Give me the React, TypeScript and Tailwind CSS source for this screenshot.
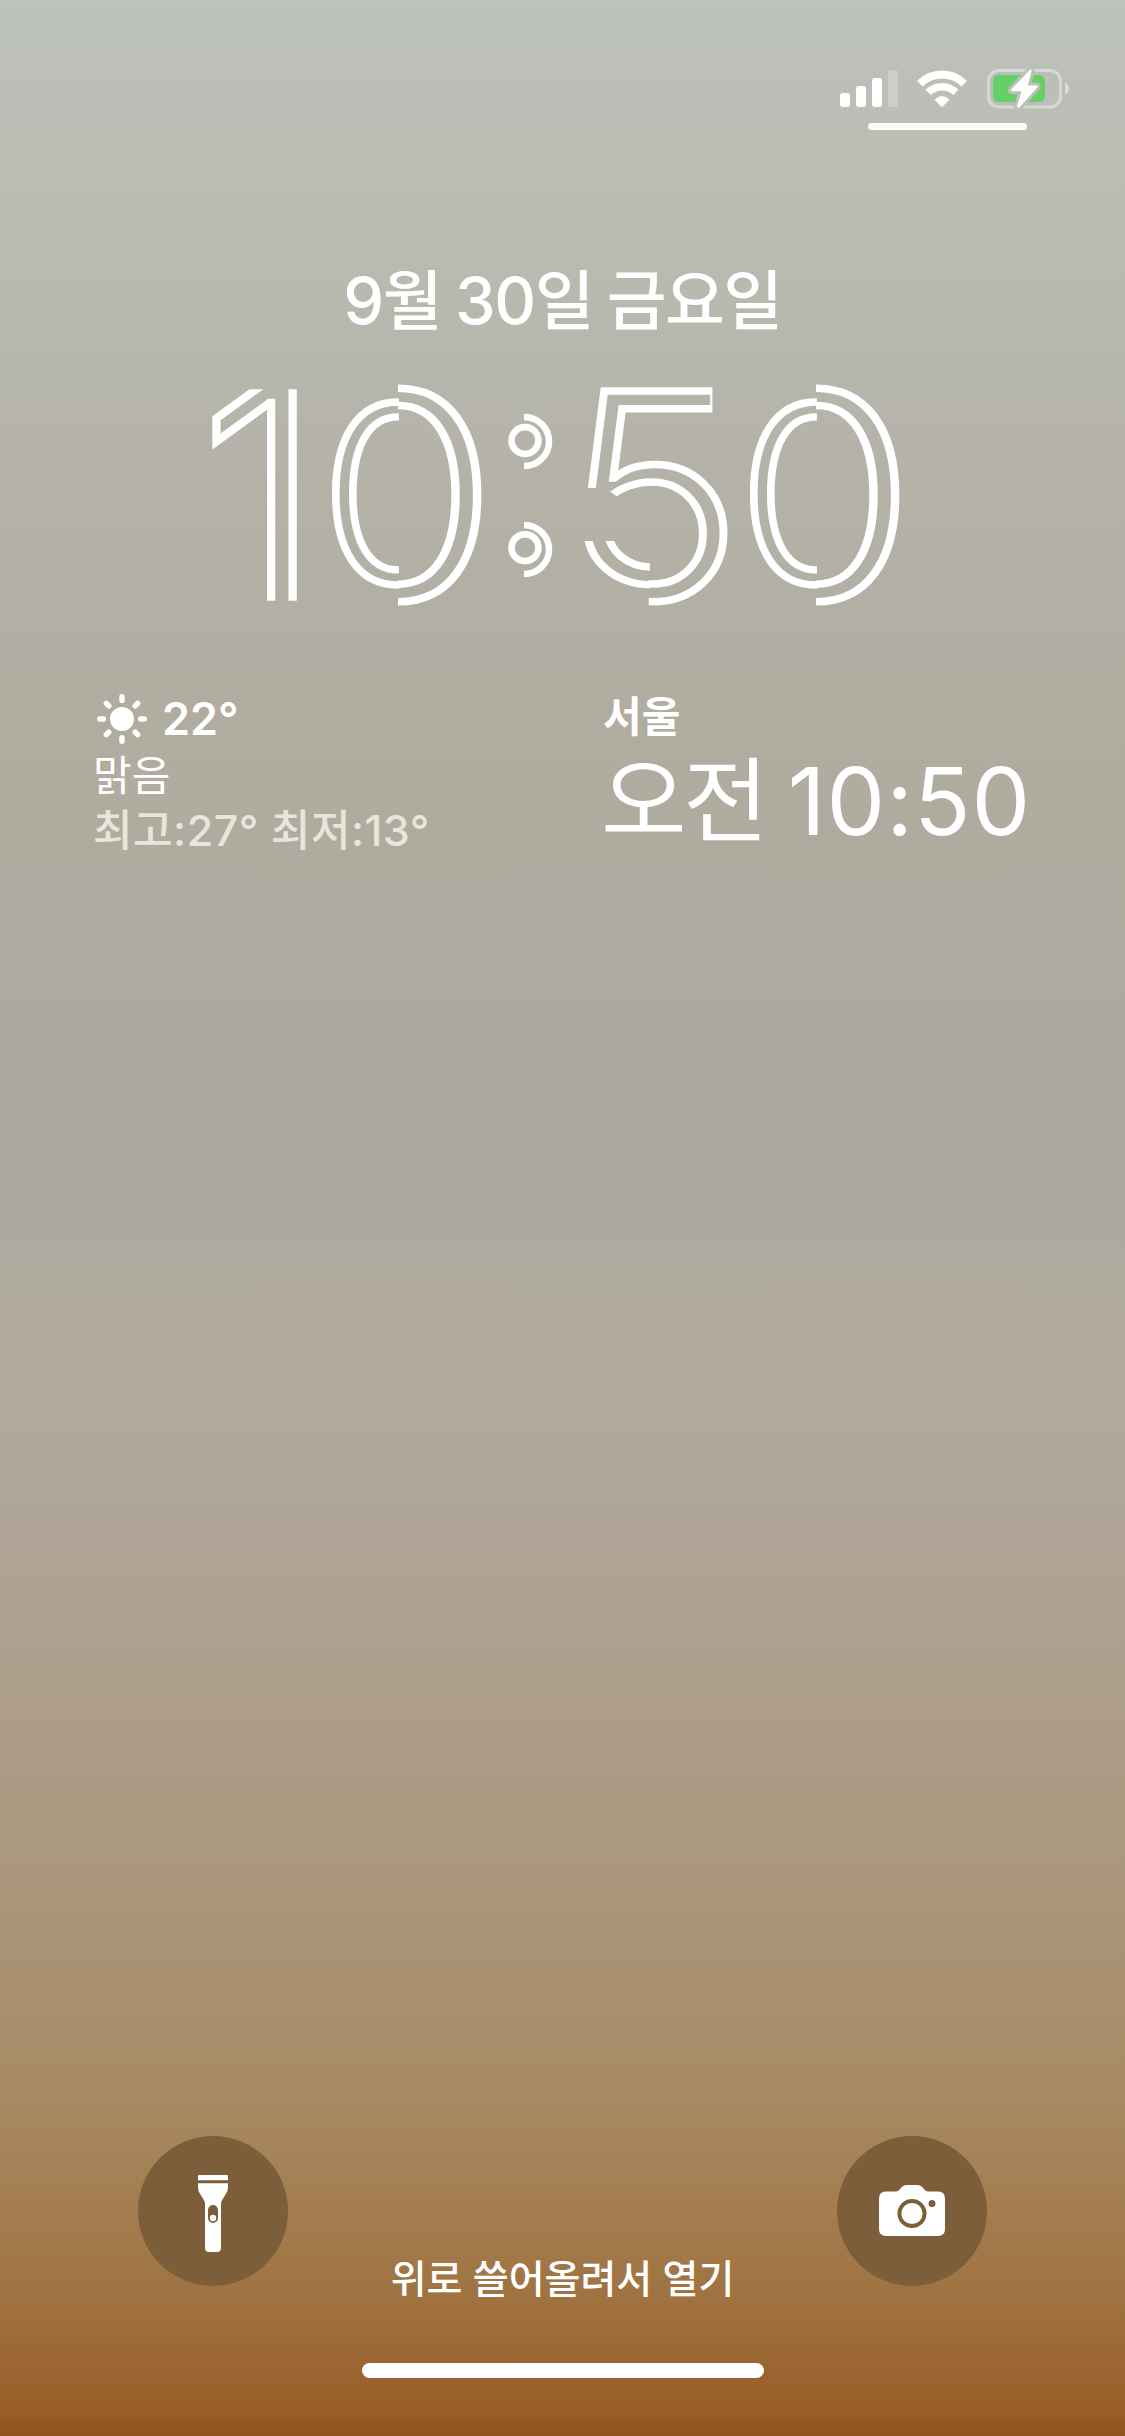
import type { ReactNode } from 'react';

const KO_FONT = "font-['Inter','Noto_Sans_CJK_KR',sans-serif]";

function SignalIcon() {
    return (
        <svg width="58" height="38" viewBox="0 0 58 38" fill="white">
            <rect x="0" y="23" width="10" height="14" rx="3" />
            <rect x="16" y="16" width="10" height="21" rx="3" />
            <rect x="32" y="8" width="10" height="29" rx="3" />
            <rect x="48" y="0" width="10" height="37" rx="3" opacity="0.25" />
        </svg>
    );
}

function WifiIcon() {
    return (
        <svg width="50" height="38" viewBox="0 0 50 38" fill="none" stroke="white">
            <path d="M2.8 13.6a31.5 31.5 0 0 1 44.4 0" strokeWidth="8" />
            <path d="M11.2 22.4a19.5 19.5 0 0 1 27.6 0" strokeWidth="7.5" />
            <path d="M17.5 29.5Q25 22.5 32.5 29.5L25.8 36.6Q25 37.4 24.2 36.6Z" fill="white" stroke="none" />
        </svg>
    );
}

const BOLT = 'M42.5 1.2 L24.2 20.5 Q23.2 22.3 25.2 22.3 L34.5 22.3 L30 37 Q30.4 39.6 32.6 38.2 L50.3 18.6 Q51.3 16.6 49.3 16.6 L40.8 16.6 L44.6 2.2 Q44.4 -0.4 42.5 1.2Z';

function BatteryIcon() {
    return (
        <svg width="83" height="41" viewBox="0 0 83 41" fill="none">
            <defs>
                <mask id="bolt-gap">
                    <rect width="83" height="41" fill="white" />
                    <path d={BOLT} fill="black" stroke="black" strokeWidth="6" strokeLinejoin="round" />
                </mask>
            </defs>
            <g mask="url(#bolt-gap)">
                <rect x="1.5" y="1.5" width="72" height="36.5" rx="10.5" stroke="white" strokeOpacity="0.4" strokeWidth="3" />
                <rect x="6" y="6" width="52" height="27" rx="5.5" fill="#67cf68" />
            </g>
            <path d="M78 13.5q4 2 4 6.2t-4 6.2z" fill="white" fillOpacity="0.45" />
            <path d={BOLT} fill="white" />
        </svg>
    );
}

function SunIcon() {
    return (
        <svg width="50" height="50" viewBox="0 0 50 50" fill="white" stroke="white" strokeWidth="5.4" strokeLinecap="round">
            <circle cx="25" cy="25" r="12" stroke="none" />
            {[0, 45, 90, 135, 180, 225, 270, 315].map((deg) => (
                <path key={deg} d="M25 2.8v3.6" transform={`rotate(${deg} 25 25)`} />
            ))}
        </svg>
    );
}

function FlashlightIcon() {
    return (
        <svg width="30" height="78" viewBox="0 0 30 78" fill="white">
            <path d="M1 0h28q1 0 1 1v4.3H0V1q0-1 1-1z" />
            <path fillRule="evenodd" d="M0 8.2h30v4.2q0 4-2.4 7.2l-2.9 4.4q-1.7 2.5-1.7 5V73q0 4-4 4h-8q-4 0-4-4V29q0-2.5-1.7-5L2.4 19.6q-2.4-3.2-2.4-7.2zM15 30a5 5 0 0 0-5 5v8a5 5 0 0 0 10 0v-8a5 5 0 0 0-5-5z" />
            <circle cx="15" cy="43" r="3.2" />
        </svg>
    );
}

function CameraIcon() {
    return (
        <svg width="66" height="52" viewBox="0 0 66 52" fill="white">
            <path fillRule="evenodd" d="M7 6.5h9.5q2 0 3.6-1.6l2.7-2.8Q24.8 0 27.5 0h11q2.7 0 4.7 2.1l2.7 2.8q1.6 1.6 3.6 1.6H59q7 0 7 7V44q0 7-7 7H7q-7 0-7-7V13.5q0-7 7-7zM33 14a14.5 14.5 0 1 0 0 29a14.5 14.5 0 1 0 0-29zM53 15a3.5 3.5 0 1 0 0 7a3.5 3.5 0 1 0 0-7z" />
            <circle cx="33" cy="28.5" r="10.6" />
        </svg>
    );
}

function RoundButton({ label, children }: { label: string; children: ReactNode }) {
    return (
        <button aria-label={label} className="flex size-[150px] items-center justify-center rounded-full bg-[#7d5e3b]">
            {children}
        </button>
    );
}

// The left half is a smaller copy, so its outer line runs into the inner line of the right half
function Zero() {
    return (
        <span className="relative -ml-[19px] block w-[180px] text-center before:absolute before:inset-0 before:-translate-y-[1.5px] before:scale-x-[0.89] before:scale-y-[0.857] before:content-['0'] before:[-webkit-text-stroke:8.5px_white] before:[clip-path:inset(-20px_89px_-20px_0)]">
            <span className="block scale-x-[1.13] [clip-path:inset(0_0_0_90px)]">0</span>
        </span>
    );
}

// Same idea for the hook at the lower left, which sits one line higher
function Five() {
    return (
        <span className="relative block w-[180px] -translate-x-[2px] scale-x-[1.06] text-center before:absolute before:inset-0 before:-translate-y-[17px] before:content-['5'] before:[clip-path:polygon(0_188px,87px_188px,87px_260px,0_260px)]">
            <span className="block [clip-path:polygon(0_0,146px_0,146px_60px,180px_60px,180px_250px,86px_250px,86px_150px,45px_118px,0_118px)]">5</span>
        </span>
    );
}

function Colon() {
    return (
        <span className="relative -ml-px block w-[76px] text-center text-[255px] [-webkit-text-stroke:6.5px_white] [font-feature-settings:'case']">
            :
            <svg className="absolute inset-0" width="76" height="250" viewBox="0 0 76 250" fill="none" stroke="white" strokeWidth="6.5">
                <path d="M37 47a25 24.5 0 0 1 0 49" />
                <path d="M37 155a25 24.5 0 0 1 0 49" />
            </svg>
        </span>
    );
}

export default function App() {
    return (
        <div
            className={`flex h-[2436px] w-[1125px] flex-col overflow-hidden text-white ${KO_FONT}
            bg-[linear-gradient(180deg,#bcc2bc_0%,#bcbdb5_6%,#b8b8ae_13%,#b4b1a7_21%,#b0aca0_30%,#aea99e_42%,#aea99e_50%,#b0a99e_58%,#aea08f_67%,#aa977c_77%,#a88a64_86%,#a07442_94%,#985d28_99%,#915320_100%)]`}
        >
            {/* Status bar */}
            <div className="flex h-[140px] flex-col items-end">
                <div className="mt-[69px] mr-[55px] flex h-[41px] items-start">
                    <div className="mt-[1px] mr-[19px]"><SignalIcon /></div>
                    <div className="mt-[1px] mr-[20px]"><WifiIcon /></div>
                    <BatteryIcon />
                </div>
                <div className="mt-[13px] mr-[98px] h-[7px] w-[159px] rounded-full bg-[#fdfff6]" />
            </div>

            {/* Date and clock */}
            <div className="mt-[111px] h-[100px] text-center text-[65px] leading-[100px] font-medium tracking-[-1.5px] [word-spacing:-2px]">9월 30일 금요일</div>
            <div className="mt-[19px] ml-[187px] flex h-[250px] text-[286px] leading-[250px] font-light text-transparent [-webkit-text-stroke:7.5px_white]">
                <span className="block w-[140px] translate-x-[4px] scale-x-[1.1] scale-y-[1.08] text-center [clip-path:inset(27px_0_27px_0)]">1</span>
                <Zero />
                <Colon />
                <span className="w-[2px]" />
                <Five />
                <Zero />
            </div>

            {/* Widgets */}
            <div className="mt-[68px] flex h-[172px]">
                <div className="ml-[94px] w-[509px] pt-[1px]">
                    <div className="flex h-[60px] items-center gap-[15px] pl-[3px] text-[45px] font-semibold">
                        <SunIcon />
                        <span>22°</span>
                    </div>
                    <div className="-ml-px h-[54px] text-[42px] leading-[54px]">맑음</div>
                    <div className="-ml-px h-[54px] text-[43px] leading-[54px] font-medium tracking-[0.5px] text-[#e8e5da]">최고:27° 최저:13°</div>
                </div>
                <div>
                    <div className="h-[60px] text-[42px] leading-[58px] font-semibold">서울</div>
                    <div className="-ml-[2px] h-[110px] text-[93px] leading-[106px] whitespace-nowrap">
                        <span className="tracking-[-3.5px]">오전 </span>
                        <span className="tracking-[1px]">10:50</span>
                    </div>
                </div>
            </div>

            {/* Bottom controls */}
            <div className="mt-auto flex h-[170px] justify-between px-[138px]">
                <RoundButton label="손전등"><div className="pt-[5px]"><FlashlightIcon /></div></RoundButton>
                <div className="mt-[113px] text-[39px] leading-[60px] font-medium">위로 쓸어올려서 열기</div>
                <RoundButton label="카메라"><div className="pb-[1px]"><CameraIcon /></div></RoundButton>
            </div>
            <div className="mx-auto mt-[57px] mb-[58px] h-[15px] w-[402px] shrink-0 rounded-full bg-white" />
        </div>
    );
}
